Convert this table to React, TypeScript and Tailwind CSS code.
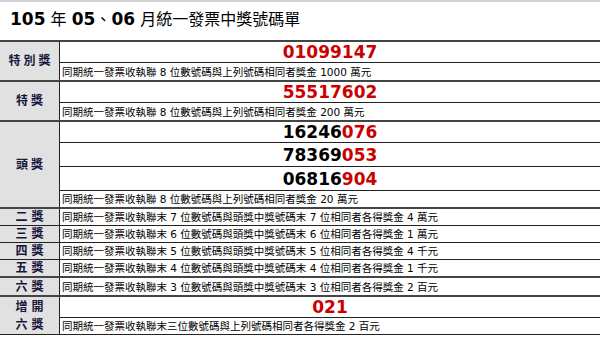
type Num = { head?: string; tail: string };

type Prize = {
  label: string[];
  nums: Num[];
  desc: string;
};

const prizes: Prize[] = [
  {
    label: ["特別獎"],
    nums: [{ tail: "01099147" }],
    desc: "同期統一發票收執聯 8 位數號碼與上列號碼相同者獎金 1000 萬元",
  },
  {
    label: ["特獎"],
    nums: [{ tail: "55517602" }],
    desc: "同期統一發票收執聯 8 位數號碼與上列號碼相同者獎金 200 萬元",
  },
  {
    label: ["頭獎"],
    nums: [
      { head: "16246", tail: "076" },
      { head: "78369", tail: "053" },
      { head: "06816", tail: "904" },
    ],
    desc: "同期統一發票收執聯 8 位數號碼與上列號碼相同者獎金 20 萬元",
  },
];

const singles = [
  { label: "二獎", desc: "同期統一發票收執聯末 7 位數號碼與頭獎中獎號碼末 7 位相同者各得獎金 4 萬元", top: "border-t-2 border-[#444]", h: "h-[16px]" },
  { label: "三獎", desc: "同期統一發票收執聯末 6 位數號碼與頭獎中獎號碼末 6 位相同者各得獎金 1 萬元", top: "border-t border-[#222]", h: "h-[16px]" },
  { label: "四獎", desc: "同期統一發票收執聯末 5 位數號碼與頭獎中獎號碼末 5 位相同者各得獎金 4 千元", top: "border-t border-[#222]", h: "h-[16px]" },
  { label: "五獎", desc: "同期統一發票收執聯末 4 位數號碼與頭獎中獎號碼末 4 位相同者各得獎金 1 千元", top: "border-t border-[#222]", h: "h-[16px]" },
  { label: "六獎", desc: "同期統一發票收執聯末 3 位數號碼與頭獎中獎號碼末 3 位相同者各得獎金 2 百元", top: "border-t-2 border-[#444]", h: "h-[17px]" },
];

function Label({ lines, wide }: { lines: string[]; wide?: boolean }) {
  return (
    <div
      className={`w-[60px] shrink-0 bg-[#e1e1e1] border-r border-[#222] flex flex-col items-center justify-center text-[12px] font-bold leading-[16px] text-[#16163a] ${wide ? "tracking-[4px] pl-[4px]" : "tracking-[3px] pl-[3px]"}`}
    >
      {lines.map((l) => (
        <div key={l}>{l}</div>
      ))}
    </div>
  );
}

function Desc({ text, h = "h-[16px]" }: { text: string; h?: string }) {
  return (
    <div className={`${h} text-[10.5px] flex items-center pl-[2px] pt-[1px] leading-none text-black whitespace-nowrap`}>
      {text}
    </div>
  );
}

export default function App() {
  return (
    <div className="w-[600px] h-[337px] overflow-hidden bg-white font-['DejaVu_Sans','Noto_Sans_CJK_TC',sans-serif]">
      <div className="h-[40px] border-t-2 border-[#d2d2d2] flex items-center pl-[10px] pb-[3px] text-[16px] text-black whitespace-nowrap">
        <span className="font-bold text-[17px]">105</span>
        <span>&nbsp;年&nbsp;</span>
        <span className="font-bold text-[17px]">05</span>
        <span>、</span>
        <span className="font-bold text-[17px]">06</span>
        <span>&nbsp;月統一發票中獎號碼單</span>
      </div>

      {prizes.map((p, gi) => (
        <div key={gi} className="flex border-t-2 border-[#444]">
          <Label lines={p.label} />
          <div className="flex-1 flex flex-col">
            {p.nums.map((n, i) => (
              <div
                key={i}
                className={`${i > 0 ? "h-[24px] pt-[2px]" : "h-[21px] pt-[1px]"} border-b border-[#222] flex items-center justify-center text-[17px] font-bold leading-none`}
              >
                {n.head && <span className="text-black">{n.head}</span>}
                <span className="text-[#cc0000]">{n.tail}</span>
              </div>
            ))}
            <Desc text={p.desc} h={p.nums.length > 1 ? "h-[16px]" : "h-[17px]"} />
          </div>
        </div>
      ))}

      {singles.map((s) => (
        <div key={s.label} className={`flex ${s.top}`}>
          <Label lines={[s.label]} wide />
          <div className="flex-1 flex flex-col">
            <Desc text={s.desc} h={s.h} />
          </div>
        </div>
      ))}

      <div className="flex border-t-2 border-[#444] border-b border-b-[#222]">
        <div className="w-[60px] shrink-0 bg-[#e1e1e1] border-r border-[#222] flex flex-col items-center justify-center text-[12px] font-bold leading-[18px] tracking-[4px] pl-[4px] text-[#16163a]">
          <div>增開</div>
          <div>六獎</div>
        </div>
        <div className="flex-1 flex flex-col">
          <div className="h-[21px] pt-[1px] border-b border-[#222] flex items-center justify-center text-[17px] font-bold leading-none text-[#cc0000]">
            021
          </div>
          <Desc text="同期統一發票收執聯末三位數號碼與上列號碼相同者各得獎金 2 百元" />
        </div>
      </div>
    </div>
  );
}
